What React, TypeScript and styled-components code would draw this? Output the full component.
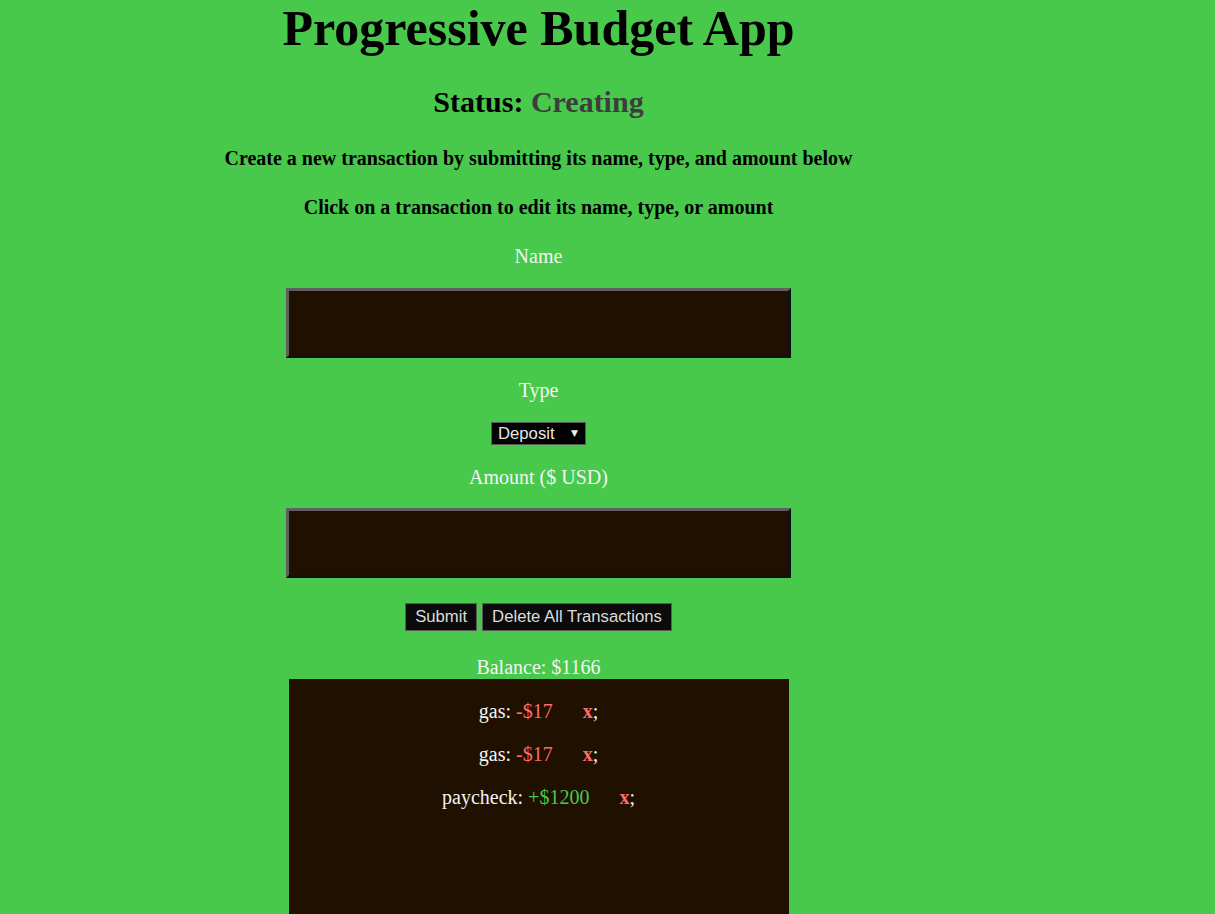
import React from "react";
import styled, { createGlobalStyle } from "styled-components";

const GlobalStyle = createGlobalStyle`
  html, body {
    margin: 0;
    padding: 0;
    background: #48c94c;
  }
  body {
    font-family: "Liberation Serif", "Times New Roman", serif;
    color: #f4f4f4;
  }
`;

const Page = styled.main`
  width: 1077px;
  display: flex;
  flex-direction: column;
  align-items: center;
  text-align: center;
`;

const Title = styled.h1`
  margin: 0;
  font-size: 50px;
  line-height: 56px;
  font-weight: bold;
  color: #000;
`;

const Status = styled.h2`
  margin: 29px 0 0;
  font-size: 30px;
  line-height: 34px;
  font-weight: bold;
  color: #000;
`;

const StatusValue = styled.span`
  color: #3d3d3d;
`;

const Instruction = styled.h4<{ $top: number }>`
  margin: ${(p) => p.$top}px 0 0;
  font-size: 20px;
  line-height: 23px;
  font-weight: bold;
  color: #000;
`;

const Form = styled.form`
  display: flex;
  flex-direction: column;
  align-items: center;
`;

const Label = styled.label<{ $top: number }>`
  display: block;
  margin-top: ${(p) => p.$top}px;
  font-size: 20px;
  line-height: 23px;
  color: #f4f4f4;
`;

const TextInput = styled.input<{ $top: number }>`
  box-sizing: border-box;
  width: 505px;
  height: 70px;
  margin-top: ${(p) => p.$top}px;
  background: #1f1000;
  color: #f4f4f4;
  font-size: 20px;
  border-style: solid;
  border-width: 3px;
  border-top-color: #5f5f5f;
  border-left-color: #5f5f5f;
  border-bottom-color: #111;
  border-right-color: #111;
  outline: none;
`;

const SelectWrap = styled.div`
  position: relative;
  margin-top: 20px;
  width: 95px;
  height: 23px;
`;

const Select = styled.select`
  appearance: none;
  box-sizing: border-box;
  width: 95px;
  height: 23px;
  background: #000;
  color: #e6e6e6;
  border: 1px solid #5a5a5a;
  border-radius: 0;
  font-family: "Liberation Sans", Arial, sans-serif;
  font-size: 16.7px;
  line-height: 21px;
  padding: 0 0 0 6px;
  outline: none;
`;

const Arrow = styled.span`
  position: absolute;
  right: 8px;
  top: 5px;
  font-family: "DejaVu Sans", sans-serif;
  font-size: 9px;
  line-height: 12px;
  color: #f0f0f0;
  pointer-events: none;
`;

const ButtonRow = styled.div`
  display: flex;
  gap: 5px;
  margin-top: 25px;
`;

const Button = styled.button`
  box-sizing: border-box;
  height: 28px;
  padding: 0 9px;
  background: #0b0b0b;
  color: #dcdcdc;
  border: 1px solid #5a5a5a;
  border-radius: 0;
  font-family: "Liberation Sans", Arial, sans-serif;
  font-size: 16.7px;
`;

const Balance = styled.div`
  margin-top: 25px;
  font-size: 20px;
  line-height: 23px;
  color: #f4f4f4;
`;

const List = styled.ul`
  box-sizing: border-box;
  list-style: none;
  margin: 0;
  padding: 21px 0;
  width: 500px;
  height: 300px;
  background: #1f1000;
  display: flex;
  flex-direction: column;
  gap: 20px;
`;

const Row = styled.li`
  font-size: 20px;
  line-height: 23px;
  color: #f4f4f4;
`;

const Amount = styled.span<{ $positive: boolean }>`
  color: ${(p) => (p.$positive ? "#48c94c" : "#ff6b6b")};
`;

const Delete = styled.span`
  margin-left: 30px;
  color: #ff6b6b;
  font-weight: bold;
`;

const transactions = [
  { name: "gas", value: -17 },
  { name: "gas", value: -17 },
  { name: "paycheck", value: 1200 },
];

export default function App() {
  return (
    <>
      <GlobalStyle />
      <Page>
        <Title>Progressive Budget App</Title>
        <Status>
          Status: <StatusValue>Creating</StatusValue>
        </Status>
        <Instruction $top={28}>
          Create a new transaction by submitting its name, type, and amount below
        </Instruction>
        <Instruction $top={26}>
          Click on a transaction to edit its name, type, or amount
        </Instruction>
        <Form onSubmit={(e) => e.preventDefault()}>
          <Label $top={26} htmlFor="t-name">Name</Label>
          <TextInput $top={20} id="t-name" type="text" />
          <Label $top={21} htmlFor="t-type">Type</Label>
          <SelectWrap>
            <Select id="t-type" defaultValue="deposit">
              <option value="deposit">Deposit</option>
              <option value="expense">Expense</option>
            </Select>
            <Arrow>▼</Arrow>
          </SelectWrap>
          <Label $top={21} htmlFor="t-amount">Amount ($ USD)</Label>
          <TextInput $top={19} id="t-amount" type="number" />
          <ButtonRow>
            <Button type="submit">Submit</Button>
            <Button type="button">Delete All Transactions</Button>
          </ButtonRow>
        </Form>
        <Balance>Balance: $1166</Balance>
        <List>
          {transactions.map((t, i) => (
            <Row key={i}>
              {t.name}:{" "}
              <Amount $positive={t.value > 0}>
                {t.value > 0 ? `+$${t.value}` : `-$${Math.abs(t.value)}`}
              </Amount>
              <Delete>x</Delete>;
            </Row>
          ))}
        </List>
      </Page>
    </>
  );
}
